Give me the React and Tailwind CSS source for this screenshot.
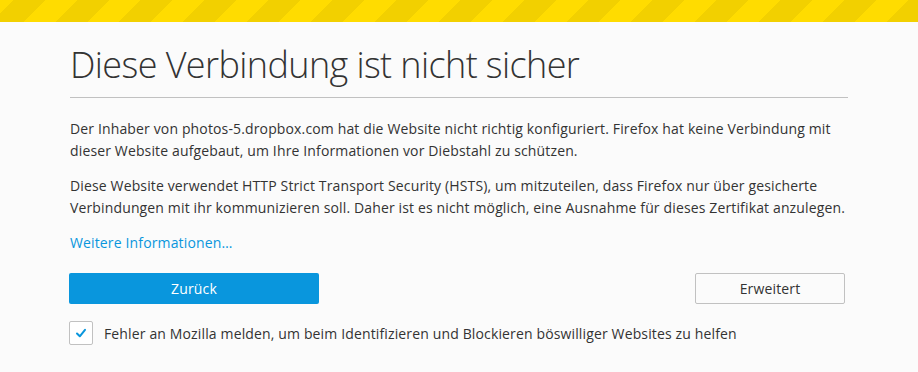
export default function App() {
  return (
    <div className="w-[918px] h-[372px] bg-[#fbfbfb] overflow-hidden" style={{ fontFamily: '"Open Sans", "Noto Sans", sans-serif' }}>
      {/* Warning stripes */}
      <div className="h-[22px] bg-[repeating-linear-gradient(-45deg,#f2d000_0px,#f2d000_22.6px,#ffdc00_22.6px,#ffdc00_45.2px)]" />

      <div className="ml-[70px] w-[778px] pt-[19px]">
        <h1 className="text-[36px] leading-[48px] font-light text-[#333] tracking-[-0.6px]">
          Diese Verbindung ist nicht sicher
        </h1>
        <hr className="mt-[8px] border-t border-[#c1c1c1]" />

        <div className="mt-[20px] text-[14px] leading-[22px] text-[#333] tracking-[0.14px]">
          <p>
            Der Inhaber von photos-5.dropbox.com hat die Website nicht richtig konfiguriert. Firefox hat keine Verbindung mit dieser Website aufgebaut, um Ihre Informationen vor Diebstahl zu schützen.
          </p>
          <p className="mt-[13px]">
            Diese Website verwendet HTTP Strict Transport Security (HSTS), um mitzuteilen, dass Firefox nur über gesicherte Verbindungen mit ihr kommunizieren soll. Daher ist es nicht möglich, eine Ausnahme für dieses Zertifikat anzulegen.
          </p>
          <a className="block mt-[13px] text-[#0996dd]">Weitere Informationen…</a>
        </div>

        <div className="mt-[19px] flex justify-between items-center">
          <button className="w-[250px] h-[31px] rounded-[2px] bg-[#0996dd] text-white text-[14px] tracking-[0.14px] -ml-px">
            Zurück
          </button>
          <button className="w-[150px] h-[31px] rounded-[2px] border border-[#c1c1c1] bg-[#fbfbfb] text-[#333] text-[14px] tracking-[0.14px] mr-[3px]">
            Erweitert
          </button>
        </div>

        <div className="mt-[17px] flex items-center gap-[11px] -ml-px">
          <div className="w-[24px] h-[24px] rounded-[2px] border border-[#c1c1c1] bg-white flex items-center justify-center">
            <svg width="14" height="14" viewBox="0 0 14 14" fill="none">
              <path d="M3 7.5 L5.8 10.3 L11 3.8" stroke="#0996dd" strokeWidth="2" strokeLinecap="round" strokeLinejoin="round" />
            </svg>
          </div>
          <span className="text-[14px] text-[#333] tracking-[0.14px]">
            Fehler an Mozilla melden, um beim Identifizieren und Blockieren böswilliger Websites zu helfen
          </span>
        </div>
      </div>
    </div>
  );
}
